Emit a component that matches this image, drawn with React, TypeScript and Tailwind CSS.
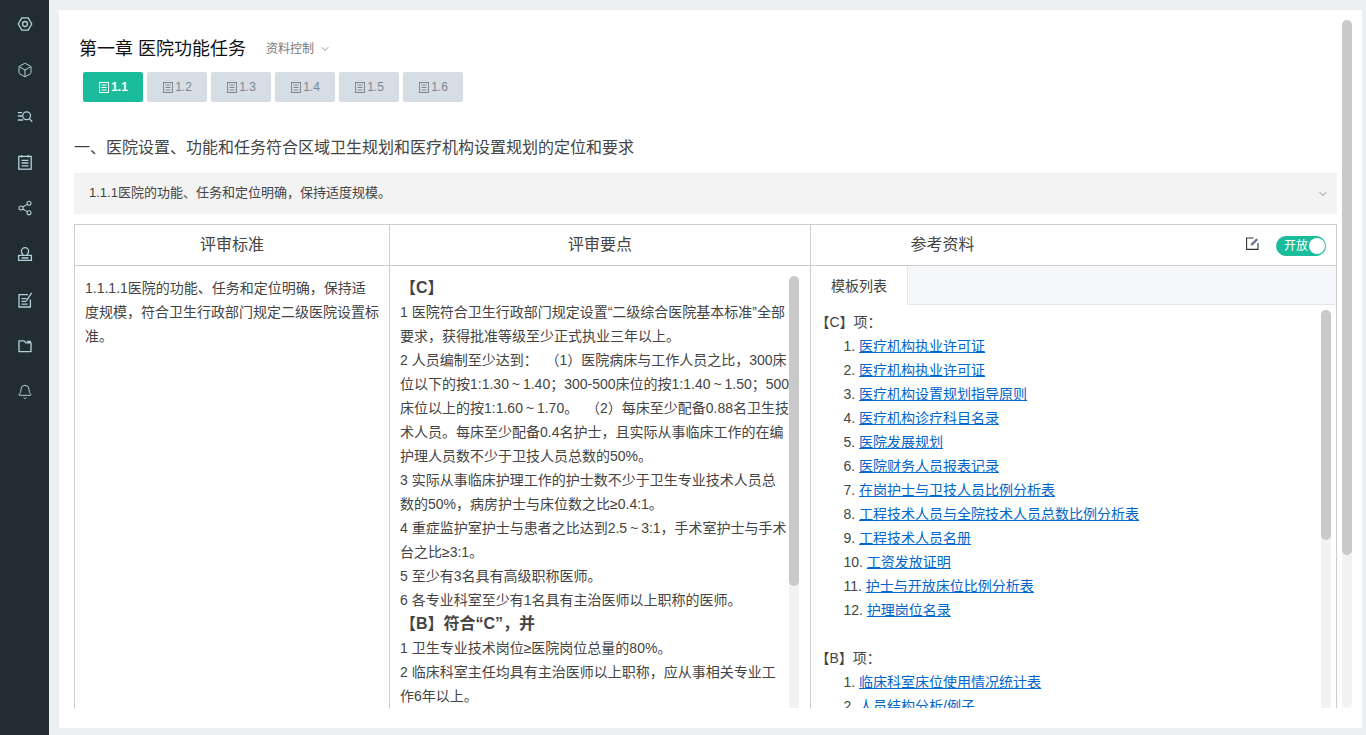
import React from "react";
import { Box, Share2, Bell, ChevronDown } from "lucide-react";

const Scrollbar = ({ thumb }: { thumb: string }) => (
  <div className="absolute right-0 top-0 bottom-0 w-[10px] rounded-[5px] bg-[#f2f2f2]">
    <div className={"w-[10px] rounded-[5px] bg-[#c9c9c9] " + thumb} />
  </div>
);

type P = { className?: string };
const Svg = ({ className, children }: P & { children: React.ReactNode }) => (
  <svg viewBox="0 0 16 16" fill="none" stroke="currentColor" strokeWidth="1.3" className={className}>
    {children}
  </svg>
);
const Hex = (p: P) => (
  <Svg {...p}>
    <path d="M4.8 1.8h6.4l3.6 6.2-3.6 6.2H4.8L1.2 8z" strokeLinejoin="round" />
    <circle cx="8" cy="8" r="2.5" />
  </Svg>
);
const SearchList = (p: P) => (
  <Svg {...p}>
    <path d="M.8 4.6h4.2M.8 8h4.2M.8 12h5.4" />
    <circle cx="9.6" cy="7.8" r="3.9" />
    <path d="M12.3 10.6l2.9 3.2" />
  </Svg>
);
const Note = (p: P) => (
  <Svg {...p}>
    <rect x="1.8" y="2.4" width="12.4" height="12.8" />
    <path d="M4.8 1v2.6M11.2 1v2.6M4.5 6.4h7M4.5 9h7M4.5 11.8h7" />
  </Svg>
);
const StampIcon = (p: P) => (
  <Svg {...p}>
    <path d="M6 9.4c0-1.2-1.6-2-1.6-4.2a3.6 3.6 0 0 1 7.2 0c0 2.2-1.6 3-1.6 4.2" />
    <path d="M1.6 9.4h12.8v5H1.6zM4.6 12h6.8" />
  </Svg>
);
const EditBox = (p: P) => (
  <Svg {...p}>
    <path d="M11 2.6H2v12.4h11.4V7.5M4.5 6.6h5M4.5 9.4h5M4.5 12.2h6M9.5 8.6L14.6.9" />
  </Svg>
);
const FolderIcon = (p: P) => (
  <Svg {...p}>
    <path d="M2 2.8h5.2l1.6 2H14v8.8H2z" strokeLinejoin="round" />
    <path d="M9.4 2.8H14v2H11z" fill="currentColor" stroke="none" />
  </Svg>
);
const DocIcon = (p: P) => (
  <svg viewBox="0 0 12 13" fill="none" stroke="currentColor" strokeWidth="1" className={p.className}>
    <rect x="1.5" y="1.5" width="9" height="10" />
    <path d="M3.5 4h5M3.5 6.5h5M3.5 9h5" />
  </svg>
);
const PenBox = (p: P) => (
  <svg viewBox="0 0 13 13" fill="none" className={p.className}>
    <path d="M7.5 1H.6v11.4H12V6" stroke="#333" strokeWidth="1.1" />
    <path d="M4.6 8.6l.4-2L10.4 1.2l1.7 1.7L6.7 8.2z" fill="#6b7a8c" />
  </svg>
);

const nav = [
  <Hex className="w-4 h-4" />,
  <Box className="w-4 h-4" strokeWidth={1.5} />,
  <SearchList className="w-4 h-4" />,
  <Note className="w-4 h-4" />,
  <Share2 className="w-4 h-4" strokeWidth={1.6} />,
  <StampIcon className="w-4 h-4" />,
  <EditBox className="w-4 h-4" />,
  <FolderIcon className="w-4 h-4" />,
  <Bell className="w-4 h-4" strokeWidth={1.5} />,
];

const tabs = ["1.1", "1.2", "1.3", "1.4", "1.5", "1.6"];

const midC = [
  "1 医院符合卫生行政部门规定设置“二级综合医院基本标准”全部",
  "要求，获得批准等级至少正式执业三年以上。",
  "2 人员编制至少达到：  （1）医院病床与工作人员之比，300床",
  "位以下的按1:1.30～1.40；300-500床位的按1:1.40～1.50；500",
  "床位以上的按1:1.60～1.70。  （2）每床至少配备0.88名卫生技",
  "术人员。每床至少配备0.4名护士，且实际从事临床工作的在编",
  "护理人员数不少于卫技人员总数的50%。",
  "3 实际从事临床护理工作的护士数不少于卫生专业技术人员总",
  "数的50%，病房护士与床位数之比≥0.4:1。",
  "4 重症监护室护士与患者之比达到2.5～3:1，手术室护士与手术",
  "台之比≥3:1。",
  "5 至少有3名具有高级职称医师。",
  "6 各专业科室至少有1名具有主治医师以上职称的医师。",
];
const midB = [
  "1 卫生专业技术岗位≥医院岗位总量的80%。",
  "2 临床科室主任均具有主治医师以上职称，应从事相关专业工",
  "作6年以上。",
];

const listC = [
  "医疗机构执业许可证",
  "医疗机构执业许可证",
  "医疗机构设置规划指导原则",
  "医疗机构诊疗科目名录",
  "医院发展规划",
  "医院财务人员报表记录",
  "在岗护士与卫技人员比例分析表",
  "工程技术人员与全院技术人员总数比例分析表",
  "工程技术人员名册",
  "工资发放证明",
  "护士与开放床位比例分析表",
  "护理岗位名录",
];
const listB = ["临床科室床位使用情况统计表", "人员结构分析/例子"];

const Line = ({ text }: { text: string }) => (
  <div>
    {text.split("～").map((part, i) => (
      <React.Fragment key={i}>
        {i > 0 && <span className="inline-block w-[14px] text-center">~</span>}
        {part}
      </React.Fragment>
    ))}
  </div>
);

const Links = ({ items }: { items: string[] }) => (
  <ol className="list-decimal list-inside pl-[28px]">
    {items.map((t, i) => (
      <li key={i} className="h-[24px]">
        <a href="#" onClick={(e) => e.preventDefault()} className="text-[#0066cc] underline">
          {t}
        </a>
      </li>
    ))}
  </ol>
);

export default function App() {
  return (
    <div className="flex h-[735px] w-[1366px] overflow-hidden bg-[#ecf0f1] text-[14px] leading-[24px] text-[#444] [font-family:'Liberation_Sans','Noto_Sans_CJK_SC',sans-serif]">
      <aside className="w-[49px] shrink-0 bg-[#222d32] flex flex-col items-center pt-[1px] text-[#b4d0dc]">
        {nav.map((n, i) => (
          <div key={i} className="h-[46px] w-full flex items-center justify-center">
            {n}
          </div>
        ))}
      </aside>

      <main className="relative flex-1 ml-[10px] mr-[4px] mt-[10px] mb-[7px] bg-white pt-[10px] pb-[20px] min-w-0">
        <div className="absolute right-[10px] top-[10px] bottom-[20px] w-[10px]">
          <Scrollbar thumb="h-[535px]" />
        </div>
        <div className="h-full overflow-hidden pl-[15px] pr-[25px]">
          <div className="flex items-center pl-[5px] pt-[18px] h-[40px]">
            <h1 className="text-[18px] leading-[24px] text-[#111] font-normal">第一章 医院功能任务</h1>
            <span className="ml-[20px] text-[12px] text-[#777] flex items-center">
              资料控制
              <ChevronDown className="w-[12px] h-[12px] ml-[5px]" strokeWidth={1.6} />
            </span>
          </div>
          <div className="flex gap-[4px] pl-[9px] mt-[12px]">
            {tabs.map((t, i) => (
              <div
                key={t}
                className={
                  "w-[60px] h-[30px] rounded-[2px] flex items-center justify-center text-[12px] " +
                  (i === 0 ? "bg-[#1abc9c] text-white font-bold" : "bg-[#d6dde4] text-[#7b8790]")
                }
              >
                <DocIcon className="w-[12px] h-[13px] mr-[1px]" />
                {t}
              </div>
            ))}
          </div>
          <h2 className="mt-[34px] mb-[13px] text-[16px] leading-[24px] font-normal text-[#444]">
            一、医院设置、功能和任务符合区域卫生规划和医疗机构设置规划的定位和要求
          </h2>
          <div className="h-[41px] bg-[#f3f3f3] flex items-center justify-between pl-[15px] pr-[8px] pb-[2px] text-[13px] text-[#444]">
            <span>1.1.1医院的功能、任务和定位明确，保持适度规模。</span>
            <ChevronDown className="w-[12px] h-[12px] text-[#667] mt-[2px]" strokeWidth={1.5} />
          </div>

          <div className="mt-[10px] border border-[#cccccc]">
            <div className="flex h-[41px] border-b border-[#cccccc] text-[16px] text-[#444]">
              <div className="w-[315px] flex items-center justify-center border-r border-[#cccccc]">评审标准</div>
              <div className="w-[421px] flex items-center justify-center border-r border-[#cccccc]">评审要点</div>
              <div className="flex-1 flex items-center">
                <div className="w-[263px] text-center">参考资料</div>
                <div className="flex-1 flex items-center justify-end pr-[10px]">
                  <PenBox className="w-[13px] h-[13px] mr-[17px] mb-[3px]" />
                  <div className="relative mt-[2px] w-[50px] h-[20px] rounded-full bg-[#1abc9c] text-white text-[12px] leading-[20px] pl-[8px]">
                    开放
                    <span className="absolute right-[1px] top-[2px] w-[16px] h-[16px] rounded-full bg-white" />
                  </div>
                </div>
              </div>
            </div>

            <div className="flex h-[620px]">
              <div className="w-[315px] border-r border-[#cccccc] pl-[10px] pr-[10px] pt-[10px]">
                1.1.1.1医院的功能、任务和定位明确，保持适度规模，符合卫生行政部门规定二级医院设置标准。
              </div>
              <div className="w-[421px] border-r border-[#cccccc] pt-[10px] pl-[10px] pr-[11px]">
                <div className="relative h-[600px] overflow-hidden pr-[10px] whitespace-pre">
                  <Scrollbar thumb="h-[310px]" />
                  <div className="text-[16px] font-bold">【C】</div>
                  {midC.map((l, i) => (
                    <Line key={i} text={l} />
                  ))}
                  <div className="text-[16px] font-bold">【B】符合“C”，并</div>
                  {midB.map((l, i) => (
                    <Line key={i} text={l} />
                  ))}
                </div>
              </div>
              <div className="flex-1 min-w-0">
                <div className="flex h-[39px] bg-[#f5f7fa] border-b border-[#e4e7ed]">
                  <div className="w-[97px] h-[39px] bg-white border-r border-[#e4e7ed] flex items-center justify-center">
                    模板列表
                  </div>
                </div>
                <div className="relative mt-[5px] mr-[5px] h-[560px] overflow-hidden pl-[4.5px] pr-[10px]">
                  <Scrollbar thumb="h-[230px]" />
                  <div>【C】项：</div>
                  <Links items={listC} />
                  <div className="h-[24px]" />
                  <div>【B】项：</div>
                  <Links items={listB} />
                </div>
              </div>
            </div>
          </div>
        </div>
      </main>
    </div>
  );
}
